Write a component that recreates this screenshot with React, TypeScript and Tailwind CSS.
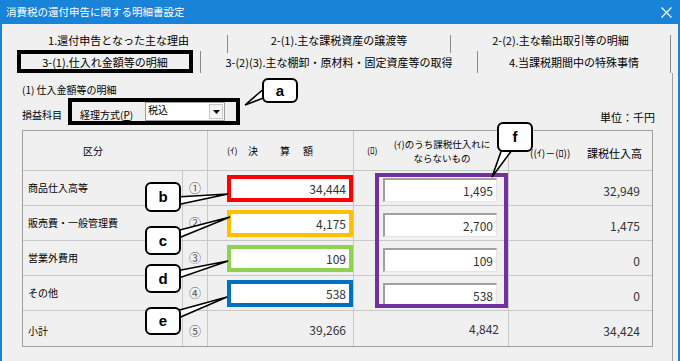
import React from "react";

type Row = { label: string; num: string; a: string; color: string; b: string; c: string };

const rows: Row[] = [
  { label: "商品仕入高等", num: "①", a: "34,444", color: "border-[#ff0000]", b: "1,495", c: "32,949" },
  { label: "販売費・一般管理費", num: "②", a: "4,175", color: "border-[#ffc000]", b: "2,700", c: "1,475" },
  { label: "営業外費用", num: "③", a: "109", color: "border-[#92d050]", b: "109", c: "0" },
  { label: "その他", num: "④", a: "538", color: "border-[#0070c0]", b: "538", c: "0" },
];

function Callout({ label, cls }: { label: string; cls: string }) {
  return (
    <div
      className={`absolute ${cls} bg-white border-[2px] border-black rounded-[6px] flex items-center justify-center font-['Liberation_Sans',sans-serif] font-bold text-[15px] leading-[16px] text-black`}
    >
      {label}
    </div>
  );
}

export default function App() {
  const cell = "border-r border-b border-[#c8c8c8]";
  return (
    <div className="relative w-[680px] h-[361px] overflow-hidden bg-[#f0f0f0] font-['Noto_Sans_CJK_JP',sans-serif] text-black shadow-[inset_2px_0_0_#1883d7,inset_-2px_0_0_#1883d7]">
      {/* Title bar */}
      <div className="h-[24px] bg-[#1883d7] flex items-center justify-between pl-[6px] pr-[8px] text-white">
        <span className="text-[10.5px] leading-[14px]">消費税の還付申告に関する明細書設定</span>
        <svg width="11" height="11" viewBox="0 0 11 11">
          <path d="M0.5 0.5L10.5 10.5M10.5 0.5L0.5 10.5" stroke="white" strokeWidth="1.2" />
        </svg>
      </div>

      {/* Tabs row 1 */}
      <div className="flex h-[20px] mt-[9px] pl-[10px] text-[11px] leading-[14px]">
        <div className="w-[217px] text-center">1.還付申告となった主な理由</div>
        <div className="w-px h-[18px] self-end bg-[#8c8c8c]" />
        <div className="w-[222px] text-center">2-(1).主な課税資産の譲渡等</div>
        <div className="w-px h-[18px] self-end bg-[#8c8c8c]" />
        <div className="w-[219px] text-center">2-(2).主な輸出取引等の明細</div>
        <div className="w-px h-[18px] self-end bg-[#8c8c8c]" />
      </div>

      {/* Tabs row 2 */}
      <div className="flex h-[23px] mt-[-3px] pl-[17px] text-[11px] leading-[14px] items-center">
        <div className="w-[176px] h-[23px] border-[4px] border-black flex items-center justify-center">
          3-(1).仕入れ金額等の明細
        </div>
        <div className="w-[7px]" />
        <div className="w-px h-[22px] bg-[#8c8c8c]" />
        <div className="w-[276px] text-center">3-(2)(3).主な棚卸・原材料・固定資産等の取得</div>
        <div className="w-px h-[22px] bg-[#8c8c8c]" />
        <div className="w-[192px] text-center">4.当課税期間中の特殊事情</div>
        <div className="w-px h-[22px] bg-[#8c8c8c]" />
      </div>

      {/* Content panel */}
      <div className="w-[673px] h-[288px] border-r border-[#a0a0a0] pl-[22px] pt-[10px] text-[10px]">
        <div className="h-[14px] leading-[14px]">(1) 仕入金額等の明細</div>
        <div className="mt-[1px] h-[27px] w-[633px] flex">
          <div className="w-[46px] self-end mb-[3px] leading-[14px] whitespace-nowrap">損益科目</div>
          <div className="w-[172px] h-[27px] border-[4px] border-black flex items-center pl-[8px]">
            <div className="w-[65px] pt-[6px] leading-[14px] whitespace-nowrap">
              経理方式(<span className="underline">P</span>)
            </div>
            <div className="w-[80px] h-[19px] bg-white border border-[#a0a0a0] flex">
              <div className="flex-1 pl-[2px] leading-[14px]">税込</div>
              <div className="w-[14px] h-[15px] mt-px mr-px bg-[#f4f4f4] border border-[#c8c8c8] flex items-center justify-center">
                <svg width="7" height="4" viewBox="0 0 7 4">
                  <path d="M0 0H7L3.5 4Z" fill="#000" />
                </svg>
              </div>
            </div>
          </div>
          <div className="flex-1" />
          <div className="self-end mb-[1px] leading-[14px] text-[11px]">単位：千円</div>
        </div>

        {/* Table */}
        <div className="mt-[5px] w-[631px] border border-[#a0a0a0] grid grid-cols-[160px_25px_146px_155px_143px] grid-rows-[40px_35px_35px_35px_35px_35px]">
          {/* Header */}
          <div className={`col-span-2 ${cell} flex items-center pl-[60px] leading-[14px]`}>区分</div>
          <div className={`${cell} flex items-center pl-[19px] leading-[14px]`}>
            <span className="w-[21px] text-[9px]">(ｲ)</span>
            <span className="w-[32px]">決</span>
            <span className="w-[23px]">算</span>
            <span>額</span>
          </div>
          <div className={`${cell} flex items-center pl-[13px]`}>
            <span className="w-[23px] text-[9px] leading-[13px]">(ﾛ)</span>
            <div className="w-[104px] text-center text-[9.5px] leading-[14px]">
              <div>(ｲ)のうち課税仕入れに</div>
              <div>ならないもの</div>
            </div>
          </div>
          <div className="border-b border-[#c8c8c8] flex items-center pl-[21px] pt-[4px] leading-[14px]">
            <span className="w-[57px] text-[10px]">((ｲ)－(ﾛ))</span>
            <span className="text-[11px]">課税仕入高</span>
          </div>

          {/* Body rows */}
          {rows.map((r) => (
            <React.Fragment key={r.num}>
              <div className={`${cell} flex items-center pl-[5px] leading-[14px]`}>{r.label}</div>
              <div className={`${cell} flex items-center justify-center text-[12px] leading-[14px] text-[#555]`}>{r.num}</div>
              <div className={`${cell} pl-[19px] pt-[4px]`}>
                <div className={`h-[27px] border-[4px] ${r.color} bg-white flex items-center justify-end pr-[3px] text-[12px] leading-[16px] text-[#333]`}>
                  {r.a}
                </div>
              </div>
              <div className={`${cell} pl-[29px] pt-[7px]`}>
                <div className="w-[114px] h-[24px] bg-white border-t-2 border-l-2 border-r border-b border-[#a0a0a0] border-r-[#e4e4e4] border-b-[#e4e4e4] flex items-center justify-end pr-[3px] text-[12px] leading-[16px] text-[#333]">
                  {r.b}
                </div>
              </div>
              <div className="border-b border-[#c8c8c8] flex items-center justify-end pr-[12px] pt-[6px] text-[12px] leading-[16px] text-[#333]">
                {r.c}
              </div>
            </React.Fragment>
          ))}

          {/* Subtotal */}
          <div className="border-r border-[#c8c8c8] flex items-center pl-[5px] pt-[4px] leading-[14px]">小計</div>
          <div className="border-r border-[#c8c8c8] flex items-center justify-center pt-[4px] text-[12px] leading-[14px] text-[#555]">⑤</div>
          <div className="border-r border-[#c8c8c8] flex items-center justify-end pr-[7px] pt-[2px] text-[12px] leading-[16px] text-[#333]">39,266</div>
          <div className="border-r border-[#c8c8c8] flex items-center justify-end pr-[9px] text-[12px] leading-[16px] text-[#333]">4,842</div>
          <div className="flex items-center justify-end pr-[12px] pt-[4px] text-[12px] leading-[16px] text-[#333]">34,424</div>
        </div>
      </div>

      {/* Annotation overlays */}
      <div className="absolute left-[375px] top-[173px] w-[133px] h-[135px] border-[4px] border-[#7030a0]" />

      <svg className="absolute left-0 top-0 pointer-events-none" width="680" height="361" viewBox="0 0 680 361">
        <g fill="white" stroke="black" strokeWidth="1.6" strokeLinejoin="miter">
          <polygon points="266,87 245,105 266,97" />
          <polygon points="176,197 228,194 176,205" />
          <polygon points="176,231 230,217 176,239" />
          <polygon points="176,271 228,261 176,279" />
          <polygon points="176,311 227,297 176,319" />
          <polygon points="503,146 492,177 515,146" />
        </g>
      </svg>

      <Callout label="a" cls="left-[262px] top-[78px] w-[36px] h-[25px]" />
      <Callout label="b" cls="left-[145px] top-[182px] w-[36px] h-[30px]" />
      <Callout label="c" cls="left-[145px] top-[226px] w-[36px] h-[29px]" />
      <Callout label="d" cls="left-[145px] top-[264px] w-[36px] h-[29px]" />
      <Callout label="e" cls="left-[145px] top-[307px] w-[36px] h-[28px]" />
      <Callout label="f" cls="left-[497px] top-[122px] w-[36px] h-[30px]" />
    </div>
  );
}
